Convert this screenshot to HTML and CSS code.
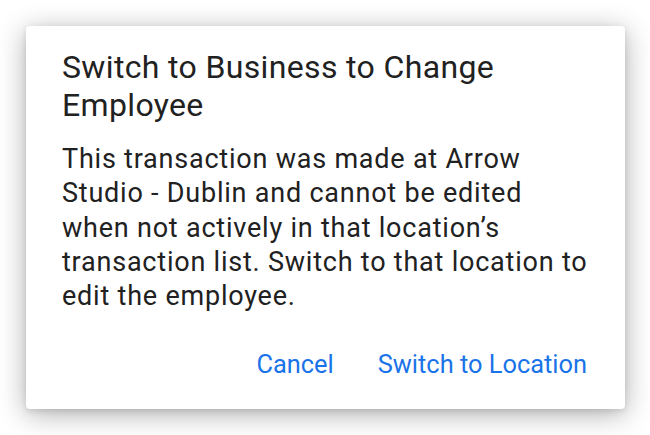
FILE: index.html
```html
<!DOCTYPE html>
<html>
<head>
<meta charset="utf-8">
<link rel="stylesheet" href="styles.css">
</head>
<body>
<div class="stage">
  <div class="dialog">
    <h1 class="title">Switch to Business to Change Employee</h1>
    <p class="message">This transaction was made at Arrow Studio - Dublin and cannot be edited when not actively in that location’s transaction list. Switch to that location to edit the employee.</p>
    <div class="actions">
      <span class="btn">Cancel</span>
      <span class="btn">Switch to Location</span>
    </div>
  </div>
</div>
</body>
</html>
```
FILE: styles.css
```css
html, body {
  margin: 0;
  padding: 0;
  background: #ffffff;
}
.stage {
  padding: 26px 25px 26px 26px;
  font-family: Roboto, "Noto Sans", sans-serif;
}
.dialog {
  box-sizing: border-box;
  width: 599px;
  height: 383px;
  background: #ffffff;
  border-radius: 4px;
  box-shadow: 0 5px 28px rgba(0, 0, 0, 0.32), 0 2px 6px rgba(0, 0, 0, 0.1);
  padding: 22px 36px 0 36px;
}
.title {
  margin: 0;
  font-size: 32px;
  line-height: 38px;
  letter-spacing: 0.35px;
  font-weight: 400;
  color: #212121;
}
.message {
  margin: 18px 0 0 0;
  font-size: 27px;
  line-height: 34.3px;
  letter-spacing: 0.78px;
  color: #212121;
}
.actions {
  display: flex;
  justify-content: flex-end;
  gap: 44px;
  margin-top: 36px;
  padding-right: 2px;
}
.btn {
  font-size: 25.4px;
  line-height: 30px;
  color: #1a73e8;
}
```
